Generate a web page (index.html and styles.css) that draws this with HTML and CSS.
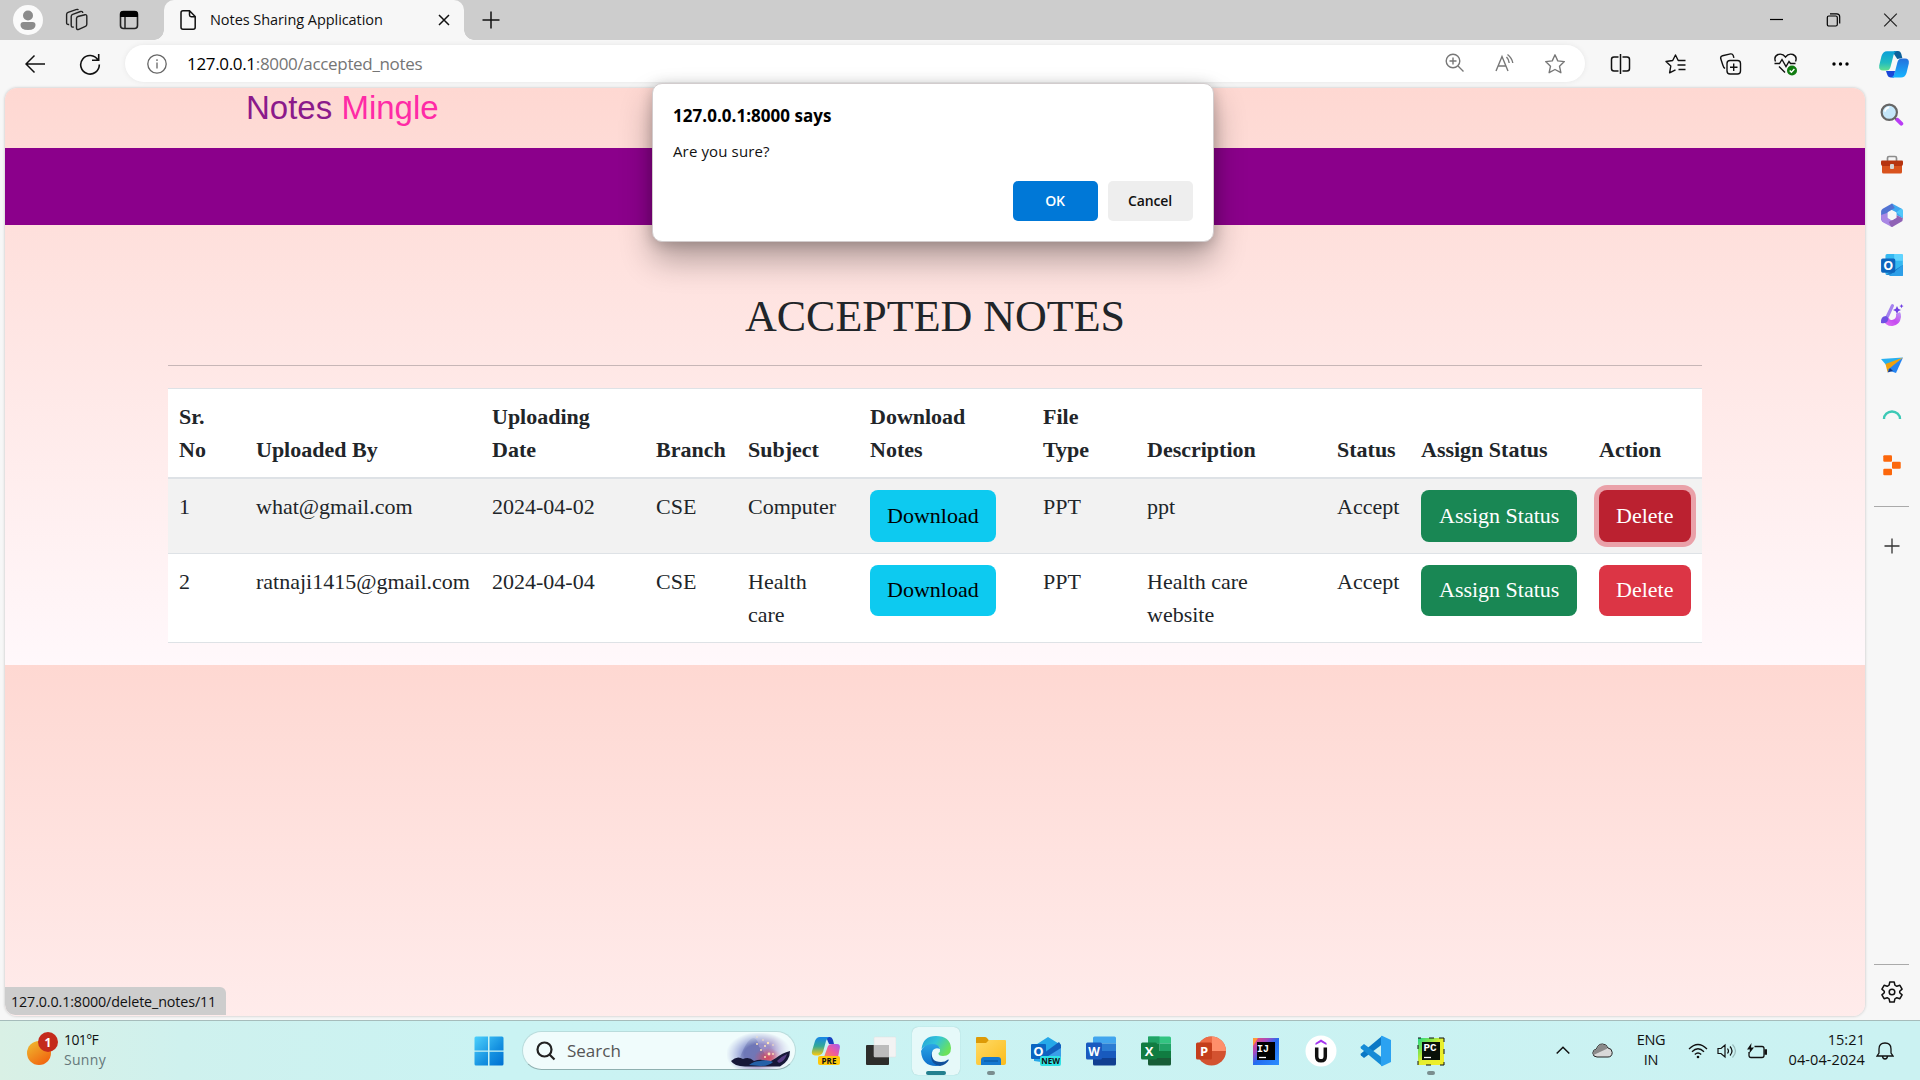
FILE: index.html
```html
<!DOCTYPE html>
<html lang="en">
<head>
<meta charset="utf-8">
<title>Notes Sharing Application</title>
<link rel="stylesheet" href="styles.css">
</head>
<body>
<header class="tabstrip">
  <div class="strip-left">
    <svg width="30" height="30" viewBox="0 0 30 30"><circle cx="15" cy="15" r="15" fill="#fafafa"/><circle cx="15" cy="10.5" r="5" fill="#8b8b8b"/><path d="M7.500 20q0-3 3-3h9q3 0 3 3q0 5-7.500 5t-7.500-5z" fill="#8b8b8b"/></svg>
    <svg width="24" height="24" viewBox="0 0 24 24" fill="none" stroke="#222" stroke-width="1.400" stroke-linejoin="round"><path d="M11.500 10.500q0-1.600 1.500-2l7-1.800q1.800-.3 1.800 1.500v8q0 1.500-1.400 2.100l-6.600 3q-2.300.8-2.300-1.300z"/><path d="M8.800 19q-2.600.6-2.600-1.800V8.500q0-1.600 1.500-2.200L15.500 3.500q2-.6 2.300 1.500M4.200 16.500q-2.600.4-2.600-1.800V6.500q0-1.600 1.500-2.200L11 1.600q2-.6 2.300.6"/></svg>
    <svg width="24" height="24" viewBox="0 0 24 24"><rect x="3.500" y="3.500" width="17" height="17" rx="3" fill="none" stroke="#222" stroke-width="1.600"/><path d="M3 9V6q0-3 3-3h12q3 0 3 3v3z" fill="#000"/><path d="M8 9v11" stroke="#222" stroke-width="1.500"/></svg>
  </div>
  <div class="tab">
    <svg width="16" height="20" viewBox="0 0 16 20" fill="none" stroke="#111" stroke-width="1.500"><path d="M3 .8h6.500l5.700 5.700v10.700q0 2-2 2H3q-2 0-2-2V2.800q0-2 2-2zM9.500 1v4q0 1.700 1.700 1.700h4"/></svg>
    <span class="tab-title">Notes Sharing Application</span>
    <svg width="12" height="12" viewBox="0 0 12 12" stroke="#111" stroke-width="1.500"><path d="M1 1l10 10M11 1L1 11"/></svg>
  </div>
  <svg class="newtab" width="18" height="18" viewBox="0 0 18 18" stroke="#111" stroke-width="1.500"><path d="M9 0.500v17M.5 9h17"/></svg>
  <div class="window-buttons">
    <svg width="14" height="14" viewBox="0 0 14 14" stroke="#000" stroke-width="1.200"><path d="M.5 6.500h13"/></svg>
    <svg width="14" height="14" viewBox="0 0 14 14" fill="none" stroke="#000" stroke-width="1.200"><rect x=".8" y="3" width="10" height="10" rx="1.500"/><path d="M3.500.8h6.700q3 0 3 3v6.700"/></svg>
    <svg width="14" height="14" viewBox="0 0 14 14" stroke="#222" stroke-width="1.200"><path d="M.7.7l12.600 12.600M13.300.7L.7 13.300"/></svg>
  </div>
</header>

<nav class="toolbar">
  <div class="nav-buttons">
    <svg width="20" height="20" viewBox="0 0 20 20" fill="none" stroke="#111" stroke-width="1.500"><path d="M20 10H1M9.500 1.500L1 10l8.500 8.500"/></svg>
    <svg width="22" height="22" viewBox="0 0 22 22" fill="none" stroke="#111" stroke-width="1.600"><path d="M19 7A9.300 9.300 0 1 0 20.300 11.500M19.700 1v6.200H13"/></svg>
  </div>
  <div class="address">
    <svg width="20" height="20" viewBox="0 0 20 20" fill="none" stroke="#666" stroke-width="1.300"><circle cx="10" cy="10" r="9.200"/><path d="M10 8.500v6M10 5.300v1.600"/></svg>
    <span class="url"><b>127.0.0.1</b>:8000/accepted_notes</span>
    <div class="address-icons">
      <svg width="20" height="20" viewBox="0 0 20 20" fill="none" stroke="#777" stroke-width="1.400"><circle cx="8" cy="8" r="6.800"/><path d="M13 13l5.500 5.500M4.500 8h7M8 4.500v7"/></svg>
      <svg width="22" height="20" viewBox="0 0 22 20" fill="none" stroke="#777" stroke-width="1.400"><path d="M2 18L8 3.500L14 18M4.300 13h7.500M12.500 4q2.500 2.500 2.700 6M13.500 1.500q4.500 3.500 5.300 8.500"/></svg>
      <svg width="22" height="22" viewBox="0 0 24 24" fill="none" stroke="#777" stroke-width="1.500" stroke-linejoin="round"><path d="M12 2l3 6.600 7.200.8-5.300 5 1.500 7.100-6.400-3.500-6.400 3.500 1.500-7.100-5.300-5L9 8.600z"/></svg>
    </div>
  </div>
  <div class="toolbar-icons">
    <svg width="20" height="20" viewBox="0 0 20 20" fill="none" stroke="#111" stroke-width="1.500"><path d="M10 0v20M8 3H3.500q-2.500 0-2.500 2.500v9q0 2.500 2.500 2.500H8M12 3h4.500q2.500 0 2.500 2.500v9q0 2.500-2.500 2.500H12"/></svg>
    <svg width="22" height="20" viewBox="0 0 22 20" fill="none" stroke="#111" stroke-width="1.400" stroke-linejoin="round"><path d="M17 6.500h-3.300L11 1 8.200 6.500l-6.700 1L6.300 12l-1.200 6.800L11 15.800M15 6.500h6M13 11h8M14 15.500h7"/></svg>
    <svg width="22" height="22" viewBox="0 0 22 22" fill="none" stroke="#111" stroke-width="1.400"><rect x="7.500" y="7.500" width="13.500" height="13.500" rx="3"/><path d="M14.200 10.500v7.500M10.500 14.200h7.500M5.500 15.500Q4 14.500 3.300 12L1.200 5.500Q.8 3.200 3 2.700l8-1.800q2-.3 2.700 1.500l.7 2.500"/></svg>
    <svg width="24" height="24" viewBox="0 0 24 24" fill="none" stroke="#111" stroke-width="1.400"><path d="M2 9.500Q0 4.500 4.500 2.500 9 1 12 5q3-4 7.500-2.500Q24 4.500 22 9.500M1 11.500h5l2.500-4 4 7 3-5 1.500 2h5M5.500 14.500l6 6"/><circle cx="18.500" cy="18.500" r="5" fill="#107c10" stroke="none"/><path d="M16.200 18.500l1.700 1.700 3-3.200" stroke="#fff"/></svg>
    <svg width="18" height="6" viewBox="0 0 18 6"><circle cx="2.500" cy="3" r="1.700"/><circle cx="9" cy="3" r="1.700"/><circle cx="15.500" cy="3" r="1.700"/></svg>
    <svg class="copilot" width="30" height="27" viewBox="0 0 30 27"><defs><linearGradient id="cpA" x1="0" y1="0" x2="0" y2="1"><stop offset="0" stop-color="#0a9fd8"/><stop offset=".6" stop-color="#22bcc0"/><stop offset="1" stop-color="#62df90"/></linearGradient><linearGradient id="cpB" x1="0" y1="0" x2="0" y2="1"><stop offset="0" stop-color="#2470dc"/><stop offset="1" stop-color="#16b4ff"/></linearGradient></defs><path d="M15 0h4q2.500 0 3.300 3l1 4-5 1-4-6z" fill="#0c609a"/><path d="M7 20h9l-1 6.500h-3Q9 26.500 8 23z" fill="#1947d8"/><path d="M8 .3h10q-2.500.5-3.500 4L11.500 16q-1 3.500-4 3.500H4q-4.500 0-3.800-5L2.500 5Q4 .3 8 .3z" fill="url(#cpA)"/><path d="M22 26.500H12q2.500-.5 3.500-4l3-11.500q1-3.500 4-3.500H26q4.500 0 3.800 5L27.500 22q-1.500 4.500-5.500 4.500z" fill="url(#cpB)"/></svg>
  </div>
</nav>

<main class="browser">
  <section class="page">
    <div class="brand"><span class="brand-a">Notes</span> <span class="brand-b">Mingle</span></div>
    <div class="banner"></div>
    <div class="content">
      <h1>ACCEPTED NOTES</h1>
      <hr>
      <table class="notes">
        <colgroup><col class="c1"><col class="c2"><col class="c3"><col class="c4"><col class="c5"><col class="c6"><col class="c7"><col class="c8"><col class="c9"><col class="c10"><col class="c11"></colgroup>
        <thead><tr><th>Sr.<br>No</th><th>Uploaded By</th><th>Uploading<br>Date</th><th>Branch</th><th>Subject</th><th>Download<br>Notes</th><th>File<br>Type</th><th>Description</th><th>Status</th><th>Assign Status</th><th>Action</th></tr></thead>
        <tbody>
          <tr class="odd"><td>1</td><td>what@gmail.com</td><td>2024-04-02</td><td>CSE</td><td>Computer</td><td><a class="btn info">Download</a></td><td>PPT</td><td>ppt</td><td>Accept</td><td><a class="btn success">Assign Status</a></td><td><a class="btn danger focused">Delete</a></td></tr>
          <tr><td>2</td><td>ratnaji1415@gmail.com</td><td>2024-04-04</td><td>CSE</td><td>Health<br>care</td><td><a class="btn info">Download</a></td><td>PPT</td><td>Health care<br>website</td><td>Accept</td><td><a class="btn success">Assign Status</a></td><td><a class="btn danger">Delete</a></td></tr>
        </tbody>
      </table>
    </div>
    <div class="status-bubble">127.0.0.1:8000/delete_notes/11</div>
  </section>
  <aside class="sidebar">
    <div class="apps">
      <svg width="22" height="22" viewBox="0 0 22 22"><path d="M14 14l1.500 1.500" stroke="#555" stroke-width="2"/><path d="M16 15.500l3.500 3.500" stroke="#b93cf5" stroke-width="3.600" stroke-linecap="round"/><circle cx="8.500" cy="8.500" r="7" fill="#c5e7fa" stroke="#666" stroke-width="2"/><path d="M4.500 8q.5-3.500 4-4" fill="none" stroke="#fff" stroke-width="1.500"/></svg>
      <svg width="24" height="20" viewBox="0 0 24 20"><path d="M7.500 6V3q0-1.500 1.500-1.500h6q1.500 0 1.500 1.500v3" fill="none" stroke="#8d8d8d" stroke-width="1.700"/><rect x="2" y="6" width="20" height="12.500" rx="1.500" fill="#d9531e"/><path d="M1 6.500q0-1 1-1h20q1 0 1 1V9q0 2-2 2H3q-2 0-2-2z" fill="#b63410"/><rect x="10" y="9" width="4" height="5" rx="1" fill="#d5d5d5"/></svg>
      <svg width="22" height="22" viewBox="0 0 22 22"><path d="M11 0.500l8.500 4.500q1.500 1 1.500 2.500v6.500l-6-3V8.500L8 5z" fill="#3fa8f0"/><path d="M11 .5L2.500 5.200Q1 6 1 7.800V15l1.500 2.500L7 14V8.500l6.500-4z" fill="#5273d2"/><path d="M1 14q0 3 2 3.800L10 21.500q1 .5 2 0l-1-5.500-4-2.500V9L1 11z" fill="#a987e4"/><path d="M12 21.500l7.500-4.200Q21 16.500 21 14l-6-3v2.500L8 17.500l2 4q1 .5 2 0z" fill="#8f62b5"/><path d="M15 8.500l6 5V7.500q0-1.700-1.500-2.500z" fill="#51c8fa"/><path d="M11 6.800l4 2.300v4.400l-4 2.300-4-2.300V9.100z" fill="#f7f7f7"/></svg>
      <svg width="22" height="22" viewBox="0 0 22 22"><rect x="5" y="1" width="16" height="19" rx="1.500" fill="#35b8f1"/><path d="M13 1h7q1 0 1 1v5h-8z" fill="#60d4ff"/><path d="M5 20h16v-9l-8 5z" fill="#1477c5"/><path d="M21 11v10H8z" fill="#2d9fe8"/><rect x="1" y="5" width="13" height="13" rx="1.500" fill="#0c65bd"/><text x="7.500" y="15.400" class="glyph" font-size="11.500" fill="#fff">O</text></svg>
      <svg width="24" height="24" viewBox="0 0 24 24"><defs><linearGradient id="ds" x1="0" x2="1" y1="1" y2="0"><stop offset="0" stop-color="#e07af4"/><stop offset=".5" stop-color="#c64af0"/><stop offset="1" stop-color="#b9a0f5"/></linearGradient></defs><path d="M3 17q3 6.500 9.500 6Q20 22 21 14q.3-3-1-5l-4 2q1 5-4 6-3 .4-3-2z" fill="url(#ds)"/><path d="M11 2q1-1.500 2.500-.6 1 .8.300 2L8.500 15l-3-1.500z" fill="#a582ef"/><path d="M1 20q-.5-7 5-7 3 1 2 4-1 4-7 3z" fill="#6e50e2"/><path d="M17 3l1.300 2.700L21 7l-2.700 1.300L17 11l-1.300-2.700L13 7l2.700-1.300zM21.500 1l.7 1.400 1.400.7-1.400.7-.7 1.400-.7-1.400-1.400-.7 1.400-.7z" fill="#7140e4"/></svg>
      <svg width="24" height="18" viewBox="0 0 24 18"><path d="M1 3L23 1.500 7 10z" fill="#28b0f0"/><path d="M23 1.500L5.500 8l2 8z" fill="#f0a10d"/><path d="M23 1.500L7.500 14l8.500 3z" fill="#2584f1"/><path d="M7.500 16.500L10 12l3 3z" fill="#123b8d"/></svg>
      <svg width="24" height="24" viewBox="0 0 24 24"><path d="M4 16a8 7.500 0 0 1 16 0" fill="none" stroke="#3cc9b6" stroke-width="2.400"/></svg>
      <svg width="20" height="22" viewBox="0 0 20 22" fill="#fc670b"><rect x="2" y="2" width="8" height="6" rx="1"/><rect x="10" y="8" width="8" height="6.500" rx="1"/><rect x="2" y="14.500" width="8" height="6" rx="1"/></svg>
    </div>
    <div class="line"></div>
    <svg class="add" width="16" height="16" viewBox="0 0 16 16" stroke="#333" stroke-width="1.300"><path d="M8 .5v15M.5 8h15"/></svg>
    <div class="line low"></div>
    <svg width="24" height="24" viewBox="0 0 24 24" fill="none" stroke="#111" stroke-width="1.500" stroke-linejoin="round"><circle cx="12" cy="12" r="2.800"/><path d="M9.800 2h4.400l.7 3.200 1.900 1.100 3.100-1 2.200 3.800-2.400 2.200v1.400l2.400 2.200-2.200 3.800-3.100-1-1.900 1.100-.7 3.200H9.800l-.7-3.200-1.900-1.100-3.100 1-2.200-3.800 2.400-2.200v-1.400L1.900 9.100l2.200-3.800 3.100 1 1.900-1.100z"/></svg>
  </aside>
</main>

<div class="dialog">
  <p class="dialog-title">127.0.0.1:8000 says</p>
  <p class="dialog-text">Are you sure?</p>
  <div class="dialog-actions"><button class="ok">OK</button><button>Cancel</button></div>
</div>

<footer class="taskbar">
  <div class="weather">
    <svg width="34" height="36" viewBox="0 0 34 36"><defs><linearGradient id="sun" x1="0" y1="0" x2=".7" y2="1"><stop offset="0" stop-color="#efbe32"/><stop offset="1" stop-color="#f1640e"/></linearGradient></defs><circle cx="13" cy="22" r="12" fill="url(#sun)"/><circle cx="22" cy="11" r="10" fill="#c42b1c"/><text x="22" y="15.500" class="glyph" font-size="12" fill="#fff">1</text></svg>
    <div><div class="t1">101°F</div><div class="t2">Sunny</div></div>
  </div>
  <div class="start">
    <svg width="30" height="30" viewBox="0 0 30 30"><defs><linearGradient id="win" x1="0" y1="0" x2="1" y2="1"><stop offset="0" stop-color="#4cd0fc"/><stop offset=".6" stop-color="#1490e0"/><stop offset="1" stop-color="#0070d2"/></linearGradient></defs><path d="M2 .5h12v14H.5V2q0-1.500 1.500-1.500zM15.500.5H28q1.500 0 1.500 1.500v12.500h-14zM.5 15.700H14v13.800H2q-1.500 0-1.500-1.500zM15.500 15.700h14V28q0 1.500-1.500 1.500H15.500z" fill="url(#win)"/></svg>
  </div>
  <div class="search">
    <svg width="20" height="20" viewBox="0 0 20 20" fill="none" stroke="#222" stroke-width="2.200"><circle cx="8.500" cy="8.500" r="7"/><path d="M13.500 13.500l5 5"/></svg>
    <span>Search</span>
    <svg class="art" width="66" height="36" viewBox="0 0 66 36"><defs><linearGradient id="sky" x1="0" y1="0" x2="1" y2=".3"><stop offset="0" stop-color="#b9c0ea"/><stop offset=".35" stop-color="#8a95d0"/><stop offset=".7" stop-color="#9d8cc4"/><stop offset="1" stop-color="#d7d9f2"/></linearGradient><radialGradient id="fade"><stop offset=".45" stop-color="#fff"/><stop offset="1" stop-color="#fff" stop-opacity="0"/></radialGradient><mask id="m"><ellipse cx="32" cy="21" rx="33" ry="22" fill="url(#fade)"/></mask><radialGradient id="glow"><stop offset="0" stop-color="#d8485c"/><stop offset="1" stop-color="#d8485c" stop-opacity="0"/></radialGradient></defs><g mask="url(#m)"><rect width="66" height="36" fill="url(#sky)"/><path d="M10 32Q20 4 27 5q4 1 5 9 6 3 9 18z" fill="#5a66a8" opacity=".6"/><ellipse cx="41" cy="25" rx="14" ry="10" fill="url(#glow)"/></g><path d="M4 28q6-6 12-2 6-3 11 2 8-3 13 1 5-1 9-4 6-5 14-7 0 10-10 15.500H18Q7 33 4 28z" fill="#171838"/><path d="M22 32q5-4 11-4 8-2 13 1-4 4-12 4z" fill="#2461a8"/><path d="M50 28q5-5 10-7-2 7-8 9z" fill="#573e85"/><g fill="#ffe5b8"><circle cx="30" cy="11" r="1"/><circle cx="36" cy="7" r=".8"/><circle cx="38" cy="13" r="1"/><circle cx="41" cy="10" r="1.200"/><circle cx="46" cy="12" r=".8"/><circle cx="34" cy="17" r="1"/><circle cx="42" cy="21" r="1.400"/><circle cx="46" cy="21" r=".9"/><circle cx="38" cy="24" r="1"/><circle cx="30" cy="4" r=".7"/></g></svg>
  </div>
  <div class="pinned">
    <div class="pin"><svg width="30" height="30" viewBox="0 0 30 30"><defs><linearGradient id="pA" x1="0" y1="0" x2="0" y2="1"><stop offset="0" stop-color="#1785e8"/><stop offset=".5" stop-color="#33a995"/><stop offset="1" stop-color="#ffc90a"/></linearGradient><linearGradient id="pB" x1="1" y1="0" x2="0" y2="1"><stop offset="0" stop-color="#a45af2"/><stop offset=".5" stop-color="#ee5aa0"/><stop offset="1" stop-color="#ff8d4a"/></linearGradient></defs><path d="M15 1h4q2 0 3 3l1 4h-5z" fill="#1740c0"/><path d="M9 1h9q-2 1-3 4l-3 11q-1 3-4 3.500H4Q0 19 1 15L4 5q1.500-4 5-4z" fill="url(#pA)"/><path d="M13 21l4-11q1-2 4-2h5q3.500 0 2.800 4L27 21z" fill="url(#pB)"/><rect x="7" y="20" width="22" height="9" rx="2" fill="#ffc80a"/><text x="18" y="27.500" class="glyph" font-size="8" fill="#111">PRE</text></svg></div>
    <div class="pin"><svg width="30" height="30" viewBox="0 0 30 30"><rect x="0" y="9" width="23" height="20" rx="1" fill="#2d2d2b"/><rect x="8" y="1" width="22" height="20" rx="1" fill="#f3f3f3" stroke="#ddd" stroke-width=".5"/><path d="M8 9h15v12H8z" fill="#bcbcbc"/></svg></div>
    <div class="pin active"><svg width="32" height="32" viewBox="0 0 32 32"><defs><linearGradient id="eA" x1="0" y1="0" x2="1" y2=".5"><stop offset="0" stop-color="#239fd5"/><stop offset=".5" stop-color="#32c4da"/><stop offset="1" stop-color="#6be25a"/></linearGradient><linearGradient id="eB" x1="0" y1="0" x2="0" y2="1"><stop offset="0" stop-color="#2ba5e4"/><stop offset="1" stop-color="#0d6fcc"/></linearGradient></defs><path d="M1.500 14Q3 1 16 1q14 0 15 12 0 8-8 8-5 0-4.500-3 2-1 1.500-4-1-4-7-4-8 0-11.500 4z" fill="url(#eA)"/><path d="M1 16q3-7 11-7 7 0 8 5-4-2-7 1-3 5 1 11l7 4q-2 1-5 1Q2 31 1 16z" fill="url(#eB)"/><path d="M12 16q-2 11 9 11 4 0 7-2.500 1-.3.700.7Q26 30 20 31 12 30 11 22q0-3 1-6z" fill="#11509b"/></svg></div>
    <div class="pin dot"><svg width="30" height="30" viewBox="0 0 30 30"><defs><linearGradient id="fd" x1="0" y1="0" x2="1" y2="1"><stop offset="0" stop-color="#ffda66"/><stop offset="1" stop-color="#fbbc1c"/></linearGradient></defs><path d="M0 2q0-1 1-1h8q1 0 2 1l2 2.500L11 8H0z" fill="#dd9a07"/><path d="M0 7h10l3-3h16q1 0 1 1v22q0 2-2 2H2q-2 0-2-2z" fill="url(#fd)"/><path d="M5 29v-5q0-3 3-3h14q3 0 3 3v5z" fill="#1478cf"/><path d="M8 25h14" stroke="#0a5ba6" stroke-width="1.300"/></svg></div>
    <div class="pin"><svg width="30" height="30" viewBox="0 0 30 30"><path d="M3 10L17 1l13 8v12L17 27 3 25z" fill="#25a8e8"/><path d="M13 17L28 6l2 3v13L16 25z" fill="#1260bd"/><path d="M14 22l16-10v14H14z" fill="#3b9ee8"/><rect x="0" y="8" width="15" height="15" rx="1" fill="#0b65c2"/><text x="7.500" y="20" class="glyph" font-size="13" fill="#fff">O</text><rect x="9" y="20" width="21" height="10" rx="2" fill="#2fe2e5"/><text x="19.500" y="28" class="glyph" font-size="8" fill="#111">NEW</text></svg></div>
    <div class="pin"><svg width="30" height="30" viewBox="0 0 30 30"><path d="M7 2q0-1.500 1.500-1.500h20Q30 .5 30 2v5.500H7z" fill="#41a5ee"/><path d="M7 7.500h23v7.500H7z" fill="#2b7cd3"/><path d="M7 15h23v7H7z" fill="#185abd"/><path d="M7 22h23v6q0 1.500-1.500 1.500h-20Q7 29.500 7 28z" fill="#103f91"/><rect y="6.500" width="16" height="17" rx="1.500" fill="#1a5abf"/><text x="8" y="19.500" class="glyph" font-size="12" fill="#fff">W</text></svg></div>
    <div class="pin"><svg width="30" height="30" viewBox="0 0 30 30"><path d="M7 2q0-1.500 1.500-1.500h20Q30 .5 30 2v5.500H7z" fill="#33c481"/><path d="M7 .5h11.500v7H7zM18.500 7.500H30v7.500H18.500z" fill="#21a366"/><path d="M7 7.500h11.500v15H7zM18.500 15H30v7H18.500z" fill="#107c41"/><path d="M7 22h23v6q0 1.500-1.500 1.500h-20Q7 29.500 7 28z" fill="#185c37"/><rect y="6.500" width="16" height="17" rx="1.500" fill="#107c41"/><text x="8" y="19.500" class="glyph" font-size="13" fill="#fff">X</text></svg></div>
    <div class="pin"><svg width="30" height="30" viewBox="0 0 30 30"><circle cx="15.500" cy="15" r="14.500" fill="#d35230"/><path d="M15.500.5A14.500 14.500 0 0 1 30 15H15.500z" fill="#ff8f6b"/><path d="M15.500.5A14.500 14.500 0 0 0 1 15h14.500z" fill="#ed6c47"/><rect y="6.500" width="16" height="17" rx="1.500" fill="#c43e1c"/><text x="8" y="19.500" class="glyph" font-size="13" fill="#fff">P</text></svg></div>
    <div class="pin"><svg width="28" height="30" viewBox="0 0 28 30"><defs><linearGradient id="ij" x1="0" y1="0" x2="1" y2="1"><stop offset="0" stop-color="#fb4b69"/><stop offset=".3" stop-color="#a34bc0"/><stop offset=".5" stop-color="#236cf0"/><stop offset="1" stop-color="#2b8eff"/></linearGradient></defs><path d="M1 2h26v27H1z" fill="url(#ij)"/><path d="M1 2h5L1 10z" fill="#ff9a39"/><path d="M5 6h18v18H5z" fill="#000"/><text x="11" y="15.500" class="glyph mono" font-size="10" fill="#fff">IJ</text><path d="M7 21.500h7" stroke="#fff" stroke-width="1.300"/></svg></div>
    <div class="pin"><svg width="32" height="32" viewBox="0 0 32 32"><circle cx="16" cy="16" r="15.500" fill="#fff"/><path d="M10.500 10V8L16 4.500 21.500 8v2L16 7z" fill="#a435f0"/><path d="M11.700 12.500v9q0 4.300 4.300 4.300t4.300-4.300v-9" fill="none" stroke="#111" stroke-width="3.500"/></svg></div>
    <div class="pin"><svg width="32" height="32" viewBox="0 0 32 32"><path d="M22 1l2 7L4 23l-3-2.500q-1-1 0-2z" fill="#0a78c5"/><path d="M1 11.500L4 9l20 15-2 7L1 13.500q-1-1 0-2z" fill="#168bd6"/><path d="M22 .7L31 5v22l-9 4.300q-1.500 0-1-1.500V2q-.5-1.300 1-1.300z" fill="#2ba2f1"/></svg></div>
    <div class="pin dot"><svg width="28" height="30" viewBox="0 0 28 30"><defs><linearGradient id="pc" x1="0" y1="0" x2="1" y2="1"><stop offset="0" stop-color="#21d789"/><stop offset=".3" stop-color="#8ee548"/><stop offset=".5" stop-color="#e6ee2f"/><stop offset="1" stop-color="#f0ee2a"/></linearGradient></defs><path d="M1 2h26v27H1z" fill="url(#pc)"/><path d="M1 29v-4M1 13V9M1 2h3M12 2h5M22 2h5v4M27 13v5M27 26v3h-4M14 29H9" fill="none" stroke="#111"/><path d="M5 6h18v18H5z" fill="#081008"/><text x="13" y="15" class="glyph mono" font-size="11" fill="#fff">PC</text><path d="M7 21.500h7" stroke="#fff" stroke-width="1.300"/></svg></div>
  </div>
  <div class="tray">
    <svg class="chev" width="14" height="9" viewBox="0 0 14 9" fill="none" stroke="#111" stroke-width="1.500"><path d="M.7 7.500L7 1.200l6.300 6.300"/></svg>
    <svg class="cloud" width="21" height="15" viewBox="0 0 21 15"><path d="M5 14Q1 14 .8 10 1 6.500 4.500 6 6 1 10.500 1q4 0 5.500 4 4 .5 4.200 4.500Q20 14 16 14z" fill="#d9d9d9" stroke="#222"/><path d="M1.500 12Q.5 7 5 6.300 6 1.500 10.500 1.500q3.500 0 5 4z" fill="#8a8a8a"/></svg>
    <div class="lang">ENG<br>IN</div>
    <svg class="wifi" width="20" height="16" viewBox="0 0 20 16" fill="none" stroke="#111" stroke-width="1.300"><path d="M1 6q9-9 18 0M4 8.800q6-6 12 0M6.800 11.500q3.200-3 6.400 0"/><circle cx="10" cy="14" r="1.300" fill="#111" stroke="none"/></svg>
    <svg class="sound" width="20" height="16" viewBox="0 0 20 16" fill="none" stroke="#111" stroke-width="1.200"><path d="M1 5.500h3L8 2v12l-4-3.500H1zM10.500 5.500q2 2.500 0 5M13 3.500q4 4.500 0 9"/><path d="M15.500 1.500q6 6.500 0 13" stroke="#9bb"/></svg>
    <svg class="battery" width="20" height="16" viewBox="0 0 20 16" fill="none" stroke="#111" stroke-width="1.300"><path d="M7.500 3.500H15q2 0 2 2v7q0 2-2 2H4q-2 0-2-2V9"/><path d="M18 7h1.500v4H18z" fill="#111"/><path d="M4.500 0L0 6.500h3L2 11l5-6.500H4z" fill="#111" stroke="none"/></svg>
    <div class="clock">15:21<br>04-04-2024</div>
    <svg class="bell" width="18" height="18" viewBox="0 0 18 18" fill="none" stroke="#111" stroke-width="1.300"><path d="M1 14L3 11V7q0-6 6-6t6 6v4l2 3zM6.500 14.500q.5 2.500 2.500 2.500t2.500-2.500"/></svg>
  </div>
</footer>
</body>
</html>
```
FILE: styles.css
```css
* { box-sizing: border-box; }
body {
  margin: 0;
  width: 1920px;
  height: 1080px;
  overflow: hidden;
  display: flex;
  flex-direction: column;
  background: #f7f7f7;
  font-family: "Open Sans", "Noto Sans", sans-serif;
  color: #111;
}
svg { display: block; flex: none; }
p { margin: 0; }
.glyph { font-family: "Open Sans", sans-serif; font-weight: 700; text-anchor: middle; }
.mono { font-family: "Liberation Mono", monospace; }

.tabstrip { height: 40px; flex: none; display: flex; align-items: center; background: #cdcdcd; }
.strip-left { width: 164px; flex: none; display: flex; align-items: center; gap: 22px; padding-left: 13px; }
.strip-left svg + svg + svg { margin-left: 6px; }
.tab {
  position: relative;
  width: 300px; height: 40px;
  padding: 0 14px 0 16px;
  display: flex; align-items: center;
  background: #f7f7f7;
  border-radius: 10px 10px 0 0;
}
.tab::before, .tab::after {
  content: ""; position: absolute; bottom: 0; width: 10px; height: 10px;
}
.tab::before { left: -10px; background: radial-gradient(circle at 0 0, transparent 9.5px, #f7f7f7 10px); }
.tab::after { right: -10px; background: radial-gradient(circle at 100% 0, transparent 9.5px, #f7f7f7 10px); }
.tab-title { flex: 1; margin-left: 14px; padding-bottom: 2px; font-size: 14.5px; letter-spacing: -0.06px; white-space: nowrap; }
.newtab { margin-left: 18px; }
.window-buttons { margin: 0 1px 0 auto; display: flex; }
.window-buttons svg { width: 57px; }

.toolbar { height: 48px; flex: none; display: flex; padding-top: 5px; }
.nav-buttons { width: 125px; height: 37px; display: flex; align-items: center; gap: 34px; padding-left: 25px; }
.address {
  width: 1460px; height: 37px;
  display: flex; align-items: center;
  padding: 0 5px 0 22px;
  background: #fff; border-radius: 19px;
  box-shadow: 0 0 5px #e6e6e6;
}
.url { flex: 1; margin-left: 20px; font-size: 17px; letter-spacing: -0.33px; color: #757575; }
.url b { font-weight: 400; color: #000; }
.address-icons { display: flex; }
.address-icons svg { width: 50px; }
.toolbar-icons { height: 37px; display: flex; align-items: center; padding-left: 8px; }
.toolbar-icons svg { width: 55px; }
.toolbar-icons .copilot { width: 52px; margin-top: 2px; }

.browser { height: 932px; flex: none; display: flex; padding-left: 5px; }
.page {
  position: relative;
  width: 1860px; height: 928px;
  overflow: hidden;
  border-radius: 12px;
  background: linear-gradient(#fed8d2, #fff8fb) 0 0 / 100% 577px;
  box-shadow: 0 0 3px #bbb;
}
.brand { height: 60px; padding-left: 241px; font: 33px/39px "Liberation Sans", Arial, sans-serif; }
.brand-a { color: #8b1a8b; }
.brand-b { color: #ff2ba6; }
.banner { height: 77px; background: #8b008b; }
.content { width: 1534px; margin-left: 163px; font-family: "Liberation Serif", "Times New Roman", serif; color: #212529; }
h1 { margin: 0; padding-top: 65px; height: 140px; font-size: 44px; line-height: 54px; font-weight: 400; text-align: center; }
hr { height: 1px; margin: 0 0 22px; border: 0; background: #c7b6b7; }
.notes { width: 1534px; table-layout: fixed; border-collapse: separate; border-spacing: 0; font-size: 22px; line-height: 33px; background: #fff; border-top: 1px solid #dee2e6; }
.notes th, .notes td { padding: 11px; text-align: left; vertical-align: top; white-space: nowrap; border-bottom: 1px solid #dee2e6; }
.notes th { vertical-align: bottom; border-bottom-width: 2px; }
.odd td { background: #f2f2f2; }
.c1 { width: 77px; } .c2 { width: 236px; } .c3 { width: 164px; } .c4 { width: 92px; }
.c5 { width: 122px; } .c6 { width: 173px; } .c7 { width: 104px; } .c8 { width: 190px; }
.c9 { width: 84px; } .c10 { width: 178px; } .c11 { width: 114px; }
.btn { display: block; width: max-content; height: 52px; padding: 9px 17px; border-radius: 8px; color: #fff; margin-right: -11px; }
tr:last-child .btn { height: 51px; padding-top: 8px; margin-bottom: -18px; }
.info { background: #0dcaf0; color: #000; }
.btn.success { background: #198754; padding-left: 18px; padding-right: 18px; }
.btn.danger { background: #dc3545; padding-right: 18px; }
.btn.focused { background: #bb2130; box-shadow: 0 0 0 5px #eaa1a9; }
.status-bubble {
  position: absolute; left: 0; bottom: 1px;
  width: 221px; height: 28px; padding-left: 6px;
  background: #cdcdcd; border-radius: 0 6px 0 10px;
  font-size: 14.3px; line-height: 29px; letter-spacing: -0.12px; white-space: nowrap;
}

.sidebar { width: 55px; display: flex; flex-direction: column; align-items: center; margin-left: -1px; }
.apps { height: 418px; padding-top: 2px; }
.apps svg { width: 24px; height: 24px; margin: 13px 0 26px; }
.line { width: 35px; height: 1px; background: #aaa; flex: none; }
.add { margin: 31px 0 410px; }
.low + svg { margin-top: 15px; }

.dialog {
  position: absolute; left: 652px; top: 83px;
  width: 562px; height: 159px;
  padding: 20px;
  background: #fff; border: 1px solid #d2cccd; border-radius: 10px;
  box-shadow: 0 18px 32px rgba(0,0,0,.3), 0 2px 14px rgba(0,0,0,.2);
}
.dialog-title { font-size: 17px; line-height: 24px; font-weight: 700; letter-spacing: 0.03px; color: #000; }
.dialog-text { margin-top: 12px; font-size: 15px; line-height: 22px; letter-spacing: 0.13px; }
.dialog-actions { display: flex; justify-content: flex-end; gap: 10px; margin-top: 19px; }
.dialog-actions button { width: 85px; height: 40px; padding: 0 1px 2px 0; border: 0; border-radius: 5px; background: #eee; font: 600 14px "Open Sans", sans-serif; letter-spacing: -0.15px; color: #111; }
.dialog-actions .ok { background: #0078d7; color: #fff; }

.taskbar {
  height: 60px; flex: none;
  display: flex; align-items: center;
  border-top: 1px solid #a6bcbb;
  background: linear-gradient(90deg, #d9f0e5, #cff1ee 180px, #caf3f3 500px, #cbf2f2);
}
.weather { width: 474px; display: flex; padding: 0 0 2px 26px; gap: 4px; font-size: 14px; line-height: 20px; }
.weather svg { margin-top: 1px; }
.t1 { letter-spacing: -0.6px; }
.t2 { color: #66787a; letter-spacing: 0.3px; }
.search { margin-left: 18px; width: 274px; height: 39px; display: flex; align-items: center; padding: 0 2px 0 13px; border-radius: 20px; background: #f0fcfc; border: 1px solid #b9dcdc; border-bottom-color: #8fb0b0; font-size: 17px; color: #555; }
.search span { flex: 1; margin-left: 11px; }
.pinned { display: flex; gap: 7px; margin-left: 6px; }
.pin { position: relative; width: 48px; height: 48px; display: flex; align-items: center; justify-content: center; border-radius: 6px; }
.active { background: #e6f9f9; box-shadow: 0 0 1px #8bb; }
.active::after, .dot::after { content: ""; position: absolute; bottom: 0; height: 4px; border-radius: 2px; }
.active::after { width: 20px; background: #22808f; }
.dot::after { width: 8px; background: #7a8e8f; }
.tray { margin-left: auto; display: flex; align-items: center; font-size: 14.5px; line-height: 20px; }
.cloud { margin-left: 22px; }
.lang { width: 40px; margin-left: 18px; padding-bottom: 2px; text-align: center; letter-spacing: -0.3px; }
.wifi { margin-left: 17px; }
.sound { margin-left: 9px; }
.battery { margin-left: 10px; }
.clock { width: 98px; padding-bottom: 2px; text-align: right; letter-spacing: 0.08px; }
.bell { margin: 0 26px 0 11px; }
```
